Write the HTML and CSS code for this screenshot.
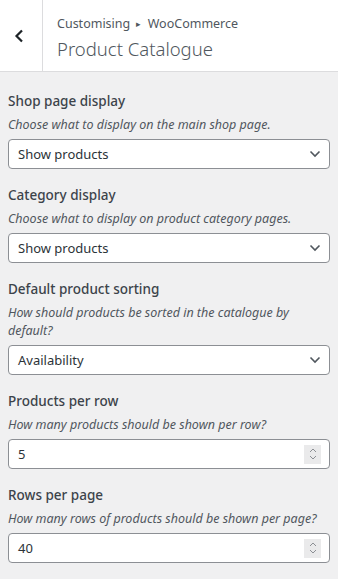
FILE: index.html
```html
<!DOCTYPE html>
<html lang="en">
<head>
  <meta charset="UTF-8" />
  <meta name="viewport" content="width=device-width,initial-scale=1.0" />
  <title>Product Catalogue</title>
  <link rel="stylesheet" href="styles.css">
</head>
<body>
  <header class="panel-head">
    <button class="back" aria-label="Back">
      <svg width="10" height="14" viewBox="0 0 10 14"><path d="M8 1.5 2.5 7 8 12.5" fill="none" stroke="#1d2327" stroke-width="2.2"/></svg>
    </button>
    <div class="head-title">
      <span class="crumb">Customising <span class="sep">&#9656;</span> WooCommerce</span>
      <span class="title">Product Catalogue</span>
    </div>
  </header>

  <main class="controls">
    <div class="control">
      <span class="ctl-title">Shop page display</span>
      <span class="ctl-desc">Choose what to display on the main shop page.</span>
      <div class="select">Show products
        <svg width="12" height="8" viewBox="0 0 12 8"><path d="M1.5 1.5 6 6 10.5 1.5" fill="none" stroke="#50575e" stroke-width="1.6"/></svg>
      </div>
    </div>

    <div class="control">
      <span class="ctl-title">Category display</span>
      <span class="ctl-desc">Choose what to display on product category pages.</span>
      <div class="select">Show products
        <svg width="12" height="8" viewBox="0 0 12 8"><path d="M1.5 1.5 6 6 10.5 1.5" fill="none" stroke="#50575e" stroke-width="1.6"/></svg>
      </div>
    </div>

    <div class="control">
      <span class="ctl-title">Default product sorting</span>
      <span class="ctl-desc">How should products be sorted in the catalogue by default?</span>
      <div class="select">Availability
        <svg width="12" height="8" viewBox="0 0 12 8"><path d="M1.5 1.5 6 6 10.5 1.5" fill="none" stroke="#50575e" stroke-width="1.6"/></svg>
      </div>
    </div>

    <div class="control">
      <span class="ctl-title">Products per row</span>
      <span class="ctl-desc">How many products should be shown per row?</span>
      <div class="number">5
        <span class="spin"><svg width="8" height="14" viewBox="0 0 8 14"><path d="M1 5 4 2 7 5M1 9 4 12 7 9" fill="none" stroke="#8c8f94" stroke-width="1"/></svg></span>
      </div>
    </div>

    <div class="control">
      <span class="ctl-title">Rows per page</span>
      <span class="ctl-desc">How many rows of products should be shown per page?</span>
      <div class="number">40
        <span class="spin"><svg width="8" height="14" viewBox="0 0 8 14"><path d="M1 5 4 2 7 5M1 9 4 12 7 9" fill="none" stroke="#8c8f94" stroke-width="1"/></svg></span>
      </div>
    </div>
  </main>
</body>
</html>
```

FILE: styles.css
```css
body{
  margin:0;
  font-family:"Noto Sans",sans-serif;
  background:#f0f0f1;
  color:#50575e;
}
.panel-head{
  display:flex;height:71px;background:#fff;border-bottom:1px solid #dcdcde;
}
.back{
  width:43px;flex:none;border:none;border-right:1px solid #dcdcde;background:#fff;
  display:flex;align-items:center;justify-content:center;padding:0 5px 0 0;
}
.head-title{
  display:flex;flex-direction:column;padding:13px 0 0 14px;
}
.crumb{font-size:12.5px;line-height:22px;color:#50575e;}
.sep{font-size:9px;vertical-align:1px;margin:0 3px;}
.title{font-size:18.5px;font-weight:300;line-height:28px;color:#50575e;}

.controls{padding:17px 8px 12px;display:flex;flex-direction:column;gap:14px;}
.control{display:flex;flex-direction:column;}
.ctl-title{font-size:13.5px;font-weight:500;line-height:24px;margin-bottom:3px;color:#3c434a;}
.ctl-desc{font-size:12.5px;font-style:italic;line-height:18px;margin-bottom:5px;}
.select,.number{
  display:flex;align-items:center;justify-content:space-between;
  box-sizing:border-box;height:30px;padding:0 8px 0 9px;background:#fff;
  border:1px solid #8c8f94;border-radius:4px;font-size:13px;color:#2c3338;
}
.spin{
  display:flex;align-items:center;justify-content:center;
  width:17px;height:19px;background:#eaeaeb;
}
```
